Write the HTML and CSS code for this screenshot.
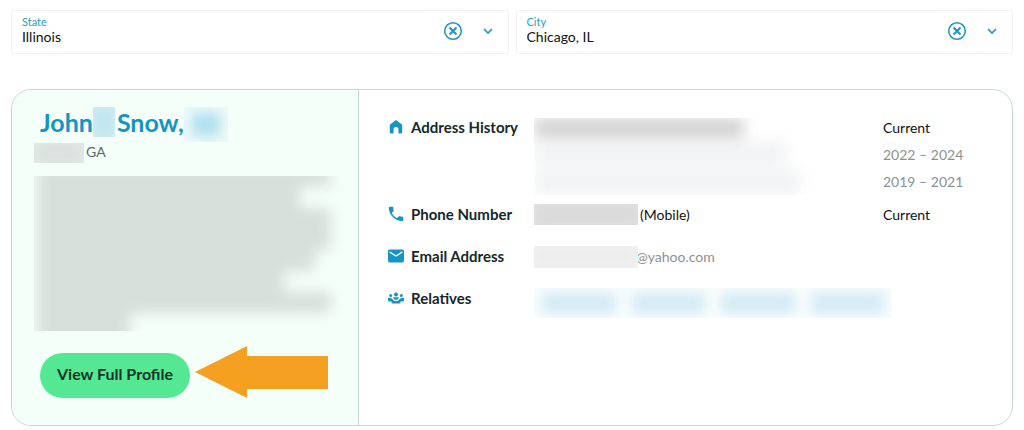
FILE: index.html
```
<!DOCTYPE html>
<html lang="en">

<head>
    <meta charset="UTF-8">
    <meta name="viewport" content="width=device-width, initial-scale=1.0">
    <title>John Snow</title>
    <link rel="stylesheet" href="styles.css">
</head>

<body>
    <form class="filters">
        <div class="filter">
            <div class="filter-field">
                <label for="state">State</label>
                <select id="state">
                    <option>Illinois</option>
                </select>
            </div>
            <button class="clear" type="button" aria-label="Clear state">
                <svg width="20" height="20" viewBox="0 0 20 20"><circle cx="10" cy="10" r="8.3" stroke-width="1.5"/><path d="M6.5 6.5l7 7M13.5 6.5l-7 7" stroke-width="2"/></svg>
            </button>
            <svg class="chevron" width="10" height="8" viewBox="0 0 10 8"><path d="M1 2l4 4 4-4" stroke-width="1.6"/></svg>
        </div>
        <div class="filter">
            <div class="filter-field">
                <label for="city">City</label>
                <select id="city">
                    <option>Chicago, IL</option>
                </select>
            </div>
            <button class="clear" type="button" aria-label="Clear city">
                <svg width="20" height="20" viewBox="0 0 20 20"><circle cx="10" cy="10" r="8.3" stroke-width="1.5"/><path d="M6.5 6.5l7 7M13.5 6.5l-7 7" stroke-width="2"/></svg>
            </button>
            <svg class="chevron" width="10" height="8" viewBox="0 0 10 8"><path d="M1 2l4 4 4-4" stroke-width="1.6"/></svg>
        </div>
    </form>

    <main class="card">
        <section class="summary">
            <h1 class="name">John<span class="hidden hidden-middle"><i></i></span>Snow,<span class="hidden hidden-age"><i></i></span></h1>
            <p class="place"><span class="hidden hidden-town"><i></i></span>GA</p>
            <div class="hidden hidden-bio">
                <div class="lines">
                    <b class="w95"></b>
                    <b class="w85"></b>
                    <b class="w95"></b>
                    <b class="w95"></b>
                    <b class="w90"></b>
                    <b class="w80"></b>
                    <b class="w95"></b>
                    <b class="w30"></b>
                </div>
            </div>
            <div class="action">
                <button class="view" type="button">View Full Profile</button>
                <svg class="arrow" width="133" height="52" viewBox="0 0 133 52"><path d="M0 26L52 0v10h81v33H52v9z"/></svg>
            </div>
        </section>

        <section class="details">
            <div class="row">
                <h2>
                    <svg width="16" height="16" viewBox="0 0 16 16"><path d="M8 1l6.2 4.8v7.4q0 1.3-1.3 1.3h-2.4v-4a2.5 2.5 0 0 0-5 0v4H3.1q-1.3 0-1.3-1.3V5.8z"/></svg>
                    Address History
                </h2>
                <div class="hidden hidden-address">
                    <div class="lines">
                        <b class="strong w75"></b>
                        <b class="w90"></b>
                        <b class="w95"></b>
                    </div>
                </div>
                <ul class="dates">
                    <li>Current</li>
                    <li class="old">2022 – 2024</li>
                    <li class="old">2019 – 2021</li>
                </ul>
            </div>
            <div class="row">
                <h2>
                    <svg width="16" height="16" viewBox="2 2 20 20"><path d="M6.62 10.79c1.44 2.83 3.76 5.14 6.59 6.59l2.2-2.2c.27-.27.67-.36 1.02-.24 1.12.37 2.33.57 3.57.57.55 0 1 .45 1 1V20c0 .55-.45 1-1 1C10.61 21 3 13.39 3 4c0-.55.45-1 1-1h3.5c.55 0 1 .45 1 1 0 1.25.2 2.45.57 3.57.11.35.03.74-.25 1.02z"/></svg>
                    Phone Number
                </h2>
                <div class="value"><span class="hidden hidden-phone"><i></i></span>(Mobile)</div>
                <div>Current</div>
            </div>
            <div class="row">
                <h2>
                    <svg width="16" height="16" viewBox="2 2 20 20"><path d="M20 4H4c-1.1 0-2 .9-2 2v12c0 1.1.9 2 2 2h16c1.1 0 2-.9 2-2V6c0-1.1-.9-2-2-2zm0 4l-8 5-8-5V6l8 5 8-5z"/></svg>
                    Email Address
                </h2>
                <div class="value old"><span class="hidden hidden-email"><i></i></span>@yahoo.com</div>
            </div>
            <div class="row">
                <h2>
                    <svg width="16" height="16" viewBox="0 0 16 16"><circle cx="8" cy="4.5" r="2"/><circle cx="2.7" cy="5.5" r="1.5"/><circle cx="13.3" cy="5.5" r="1.5"/><path d="M0 8h2.5q1.5.2 2.4 1.7Q5.6 11 8 11t3.1-1.3Q12 8.2 13.5 8H16v2.5q0 1-1 1h-2.5v1q0 1-1 1h-7q-1 0-1-1v-1H1q-1 0-1-1z"/><path d="M5 7.3h6L10 9.3q-2 1-4 0z"/></svg>
                    Relatives
                </h2>
                <div class="hidden hidden-relatives">
                    <i></i>
                    <i></i>
                    <i></i>
                    <i></i>
                </div>
            </div>
        </section>
    </main>
</body>

</html>
```
FILE: styles.css
```
* {
    box-sizing: border-box;
}

body {
    margin: 0;
    padding: 10px 11px 4px;
    background: #fff;
    color: #111;
    font: 14px/20px Lato, sans-serif;
}

h1,
h2,
p,
ul {
    margin: 0;
    padding: 0;
}

button,
select {
    border: 0;
    padding: 0;
    background: none;
    color: inherit;
    font: inherit;
    cursor: pointer;
}

/* filters */
.filters {
    display: flex;
    gap: 7px;
    margin-bottom: 35px;
}

.filter {
    flex: 1;
    display: flex;
    align-items: center;
    height: 44px;
    padding: 0 15px 2px 10px;
    border: 1px solid #f0f1f1;
    border-radius: 3px;
}

.filter-field {
    flex: 1;
    display: flex;
    flex-direction: column;
}

.filter label {
    color: #2b9dc4;
    font-size: 11px;
    line-height: 12px;
}

.filter select {
    height: 18px;
    appearance: none;
    line-height: 18px;
}

.filter svg {
    display: block;
    fill: none;
    stroke: #1c96c4;
}

.clear {
    margin-right: 20px;
}

/* card */
.card {
    display: flex;
    border: 1px solid #c6d8d6;
    border-radius: 20px;
    overflow: hidden;
}

.summary {
    flex: none;
    width: 347px;
    padding: 17px 12px 27px 22px;
    border-right: 1px solid #c6d8d6;
    background: #f5fffa;
}

.name {
    display: flex;
    height: 36px;
    padding-left: 6px;
    color: #1794c0;
    font-size: 25px;
    line-height: 30px;
}

.place {
    display: flex;
    gap: 2px;
    color: #5d6866;
    font-size: 14px;
    line-height: 18px;
}

.action {
    display: flex;
    align-items: flex-end;
    gap: 5px;
    margin-top: 15px;
    padding-left: 6px;
}

.view {
    width: 150px;
    height: 45px;
    padding-bottom: 3px;
    border-radius: 23px;
    background: #54e892;
    color: #12332b;
    font-size: 16px;
    font-weight: bold;
}

.arrow {
    fill: #f6a021;
}

.details {
    flex: 1;
    display: flex;
    flex-direction: column;
    gap: 6px;
    padding: 24px 29px 0;
}

.row {
    display: grid;
    grid-template-columns: 146px 1fr 100px;
    align-items: start;
    min-height: 36px;
    line-height: 27px;
}

.row h2 {
    display: flex;
    align-items: center;
    gap: 7px;
    font-size: 15px;
    line-height: 26px;
    color: #14282b;
}

.row h2 svg {
    fill: #1794c4;
}

.value {
    display: flex;
    align-items: center;
}

.dates {
    list-style: none;
}

.old {
    color: #8b9193;
}

/* masked data */
.hidden {
    display: block;
    overflow: hidden;
}

.hidden i {
    display: block;
    height: 100%;
    filter: blur(6px);
}

.lines {
    filter: blur(7px);
}

.lines b {
    display: block;
}

.w30 {
    width: 30%;
}

.w75 {
    width: 75%;
}

.w80 {
    width: 80%;
}

.w85 {
    width: 85%;
}

.w90 {
    width: 90%;
}

.w95 {
    width: 95%;
}

.hidden-middle {
    width: 22px;
    height: 30px;
    margin-right: 2px;
    background: #d5eff3;
}

.hidden-middle i {
    background: #c0e5ef;
}

.hidden-age {
    width: 44px;
    height: 35px;
    padding: 6px 8px;
    background: #ecfafa;
}

.hidden-age i {
    background: #b0e0ec;
}

.hidden-town {
    width: 50px;
    height: 20px;
    background: #e5ebe8;
}

.hidden-town i {
    background: #dae1de;
}

.hidden-bio {
    height: 155px;
    margin-top: 13px;
    padding-left: 3px;
}

/* pulled up so that the first line stays solid at the cut edge */
.hidden-bio .lines {
    margin-top: -10px;
}

.hidden-bio b {
    height: 21px;
    background: #d7dfdb;
}

.hidden-bio .w30 {
    height: 30px;
}

.hidden-address {
    width: 280px;
    height: 77px;
    margin-top: 4px;
}

.hidden-address b {
    height: 24px;
    margin-bottom: 4px;
    background: #f2f3f4;
}

.hidden-address .strong {
    height: 20px;
    background: #d3d3d3;
}

.hidden-phone {
    width: 104px;
    height: 21px;
    margin-right: 2px;
    background: #e4e4e4;
}

.hidden-phone i {
    background: #d9d9d9;
}

/* sits over the start of the address */
.hidden-email {
    z-index: 1;
    width: 104px;
    height: 22px;
    margin-right: -2px;
    background: #f3f3f3;
}

.hidden-email i {
    background: #ececed;
}

.hidden-relatives {
    grid-column: 2 / 4;
    display: flex;
    gap: 16px;
    width: 358px;
    height: 30px;
    margin-top: 3px;
    padding: 4px 8px;
    background: #f9fdfe;
}

.hidden-relatives i {
    flex: 1;
    background: #d5ebf4;
}
```
